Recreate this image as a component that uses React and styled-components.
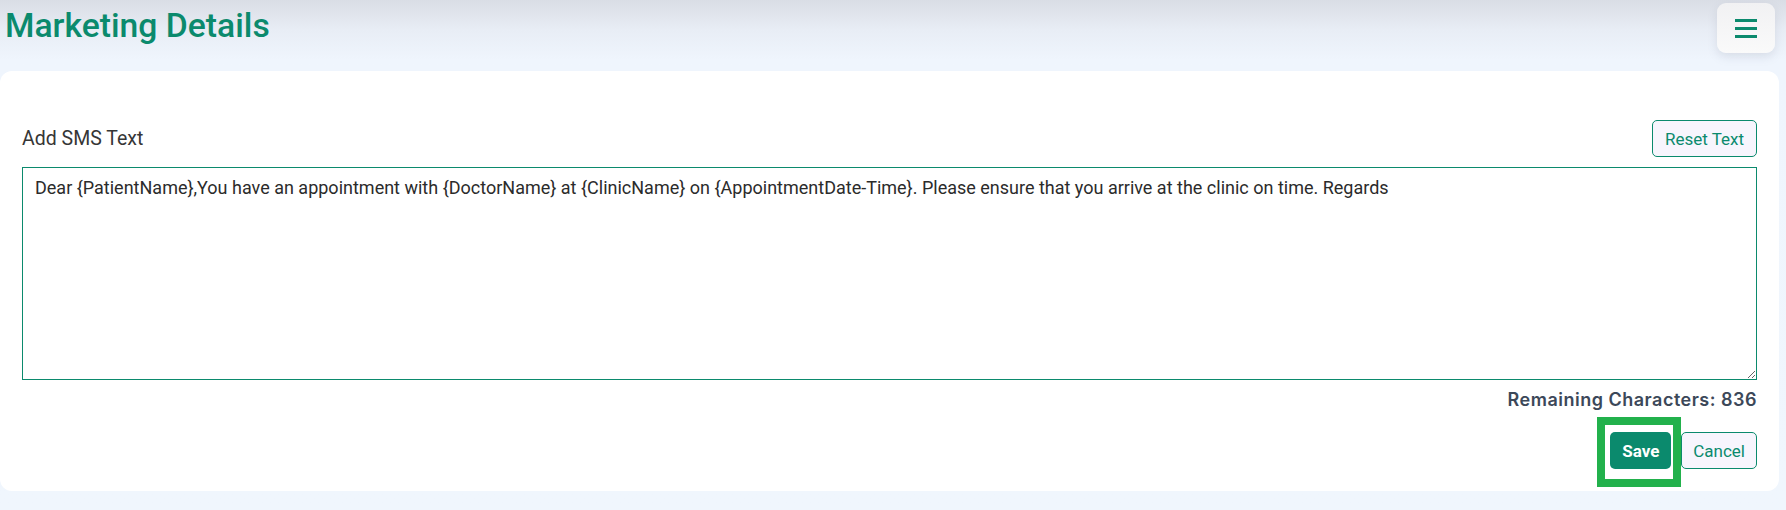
import React from "react";
import styled, { createGlobalStyle } from "styled-components";

const teal = "#0b8a6d";

const GlobalStyle = createGlobalStyle`
  html, body { margin: 0; padding: 0; }
  body {
    font-family: Roboto, "Liberation Sans", sans-serif;
    background: #f0f6fd;
  }
  * { box-sizing: border-box; }
`;

const Page = styled.div`
  min-height: 510px;
  padding-right: 7px;
  background: linear-gradient(180deg, #d9dde5 0px, #e8edf5 30px, #eff5fd 60px, #f0f6fd 100%);
`;

const Header = styled.header`
  display: flex;
  justify-content: space-between;
  align-items: flex-start;
  height: 71px;
  padding: 3px 4px 0 5px;
`;

const Title = styled.h1`
  margin: 3px 0 0;
  font-family: Roboto, "Liberation Sans", sans-serif;
  font-weight: 500;
  font-size: 33.7px;
  line-height: 40px;
  color: ${teal};
`;

const MenuButton = styled.button`
  width: 58px;
  height: 50px;
  border: none;
  border-radius: 9px;
  background: linear-gradient(180deg, #f1f1f3 0%, #fafafa 100%);
  box-shadow: 0 4px 10px rgba(120, 130, 150, 0.18);
  display: flex;
  align-items: center;
  justify-content: center;
  padding: 0;
  cursor: pointer;
`;

const Card = styled.section`
  background: #ffffff;
  border-radius: 12px;
  padding: 49px 22px 22px;
  display: flex;
  flex-direction: column;
`;

const LabelRow = styled.div`
  display: flex;
  justify-content: space-between;
  align-items: center;
  height: 37px;
`;

const Label = styled.label`
  font-size: 19.5px;
  color: #363636;
  font-weight: 400;
`;

const OutlineButton = styled.button`
  height: 37px;
  padding: 0 ${(p) => p.$px || 11}px;
  border: 1px solid ${teal};
  border-radius: 5px;
  background: #f7f5fd;
  color: ${teal};
  font-family: Roboto, "Liberation Sans", sans-serif;
  font-size: 17px;
  cursor: pointer;
`;

const TextArea = styled.textarea`
  margin-top: 10px;
  width: 100%;
  height: 213px;
  border: 1px solid ${teal};
  border-radius: 0;
  padding: 7px 12px;
  font-family: Roboto, "Liberation Sans", sans-serif;
  font-size: 18px;
  line-height: 26px;
  color: #2b2b2b;
  outline: none;
  resize: both;
`;

const Remaining = styled.div`
  margin-top: 8px;
  text-align: right;
  font-family: Inter, "Open Sans", sans-serif;
  font-weight: 600;
  font-size: 18px;
  letter-spacing: 0.5px;
  line-height: 24px;
  color: #3c4859;
`;

const Actions = styled.div`
  margin-top: 20px;
  display: flex;
  justify-content: flex-end;
  align-items: center;
`;

const Highlight = styled.span`
  position: relative;
  display: inline-flex;
  margin-right: 10px;
  &::after {
    content: "";
    position: absolute;
    left: -13px;
    right: -10px;
    top: -15px;
    bottom: -18px;
    border: 8px solid #22b14c;
    pointer-events: none;
  }
`;

const SaveButton = styled.button`
  width: 61px;
  height: 37px;
  border: none;
  border-radius: 5px;
  background: ${teal};
  color: #ffffff;
  font-family: Roboto, "Liberation Sans", sans-serif;
  font-weight: 700;
  font-size: 17px;
  padding: 0;
  cursor: pointer;
`;

const message =
  "Dear {PatientName},You have an appointment with {DoctorName} at {ClinicName} on {AppointmentDate-Time}. Please ensure that you arrive at the clinic on time. Regards";

export default function App() {
  return (
    <>
      <GlobalStyle />
      <Page>
        <Header>
          <Title>Marketing Details</Title>
          <MenuButton aria-label="menu">
            <svg width="22" height="19" viewBox="0 0 22 19">
              <rect x="0" y="0" width="22" height="3" fill={teal} />
              <rect x="0" y="8" width="22" height="3" fill={teal} />
              <rect x="0" y="16" width="22" height="3" fill={teal} />
            </svg>
          </MenuButton>
        </Header>
        <Card>
          <LabelRow>
            <Label>Add SMS Text</Label>
            <OutlineButton $px={12}>Reset Text</OutlineButton>
          </LabelRow>
          <TextArea defaultValue={message} />
          <Remaining>Remaining Characters: 836</Remaining>
          <Actions>
            <Highlight>
              <SaveButton>Save</SaveButton>
            </Highlight>
            <OutlineButton $px={11}>Cancel</OutlineButton>
          </Actions>
        </Card>
      </Page>
    </>
  );
}
